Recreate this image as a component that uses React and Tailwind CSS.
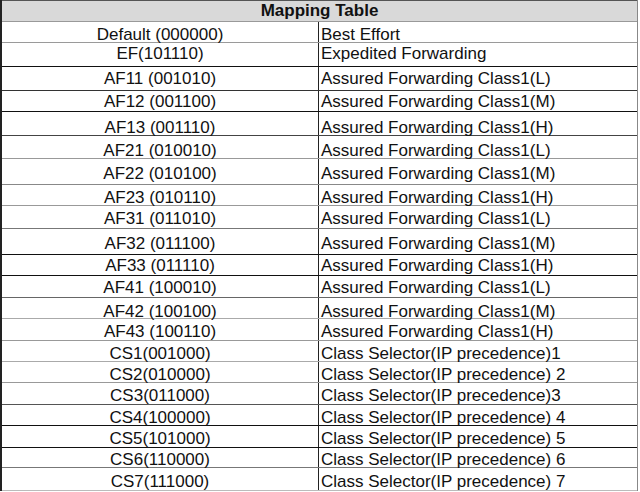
const rows = [
  { code: 'Default (000000)', name: 'Best Effort', h: 'h-[21px]', pt: 'pt-[4px]', line: 'border-[#999]' },
  { code: 'EF(101110)', name: 'Expedited Forwarding', h: 'h-[24px]', pt: 'pt-[2px]', line: 'border-[#9a9a9a]' },
  { code: 'AF11 (001010)', name: 'Assured Forwarding Class1(L)', h: 'h-[24px]', pt: 'pt-[3px]', line: 'border-[#111]' },
  { code: 'AF12 (001100)', name: 'Assured Forwarding Class1(M)', h: 'h-[21px]', pt: 'pt-[2px]', line: 'border-[#333]' },
  { code: 'AF13 (001110)', name: 'Assured Forwarding Class1(H)', h: 'h-[24px]', pt: 'pt-[7px]', line: 'border-[#111]' },
  { code: 'AF21 (010010)', name: 'Assured Forwarding Class1(L)', h: 'h-[23px]', pt: 'pt-[6px]', line: 'border-[#444]' },
  { code: 'AF22 (010100)', name: 'Assured Forwarding Class1(M)', h: 'h-[26px]', pt: 'pt-[6px]', line: 'border-[#999]' },
  { code: 'AF23 (010110)', name: 'Assured Forwarding Class1(H)', h: 'h-[21px]', pt: 'pt-[4px]', line: 'border-[#888]' },
  { code: 'AF31 (011010)', name: 'Assured Forwarding Class1(L)', h: 'h-[23px]', pt: 'pt-[4px]', line: 'border-[#999]' },
  { code: 'AF32 (011100)', name: 'Assured Forwarding Class1(M)', h: 'h-[26px]', pt: 'pt-[6px]', line: 'border-[#777]' },
  { code: 'AF33 (011110)', name: 'Assured Forwarding Class1(H)', h: 'h-[21px]', pt: 'pt-[2px]', line: 'border-[#111]' },
  { code: 'AF41 (100010)', name: 'Assured Forwarding Class1(L)', h: 'h-[22px]', pt: 'pt-[3px]', line: 'border-[#111]' },
  { code: 'AF42 (100100)', name: 'Assured Forwarding Class1(M)', h: 'h-[21px]', pt: 'pt-[5px]', line: 'border-[#666]' },
  { code: 'AF43 (100110)', name: 'Assured Forwarding Class1(H)', h: 'h-[22px]', pt: 'pt-[4px]', line: 'border-[#aaa]' },
  { code: 'CS1(001000)', name: 'Class Selector(IP precedence)1', h: 'h-[21px]', pt: 'pt-[4px]', line: 'border-[#999]' },
  { code: 'CS2(010000)', name: 'Class Selector(IP precedence) 2', h: 'h-[21px]', pt: 'pt-[4px]', line: 'border-[#aaa]' },
  { code: 'CS3(011000)', name: 'Class Selector(IP precedence)3', h: 'h-[22px]', pt: 'pt-[4px]', line: 'border-[#999]' },
  { code: 'CS4(100000)', name: 'Class Selector(IP precedence) 4', h: 'h-[21px]', pt: 'pt-[4px]', line: 'border-[#555]' },
  { code: 'CS5(101000)', name: 'Class Selector(IP precedence) 5', h: 'h-[22px]', pt: 'pt-[4px]', line: 'border-[#111]' },
  { code: 'CS6(110000)', name: 'Class Selector(IP precedence) 6', h: 'h-[20px]', pt: 'pt-[3px]', line: 'border-[#111]' },
  { code: 'CS7(111000)', name: 'Class Selector(IP precedence) 7', h: 'h-[24px]', pt: 'pt-[5px]', line: 'border-[#777]' },
];

export default function App() {
  return (
    <div className="w-[640px] h-[492px] bg-white text-[#111] text-[17px] leading-[17px]"
      style={{ fontFamily: '"Liberation Sans", Arial, sans-serif' }}>
      <div className="w-[638px] border-l-2 border-r border-l-[#222] border-r-[#888]">
        {/* шапка */}
        <div className="h-[21px] border-t border-[#555] bg-[#d9d9d9] text-center font-bold pt-[1px]">
          Mapping Table
        </div>
        {rows.map((r, i) => (
          <div key={i}
            className={`flex border-t ${r.line} ${r.h} ${i === rows.length - 1 ? 'border-b border-b-[#bbb]' : ''}`}>
            <div className={`w-[316px] text-center ${r.pt}`}>{r.code}</div>
            <div className={`flex-1 border-l border-l-[#222] pl-[2px] ${r.pt}`}>{r.name}</div>
          </div>
        ))}
      </div>
    </div>
  );
}
